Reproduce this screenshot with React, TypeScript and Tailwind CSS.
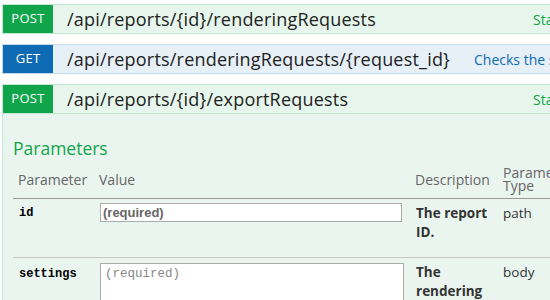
import React from "react";

const sans = { fontFamily: '"Open Sans", "Noto Sans", sans-serif' };

function Row({
  method,
  path,
  desc,
  pathW,
  color,
}: {
  method: string;
  path: string;
  desc: string;
  pathW: string;
  color: "green" | "blue";
}) {
  const g = color === "green";
  return (
    <div
      className={`flex h-[30px] w-[800px] items-stretch border ${
        g ? "border-[#c3e8d1] bg-[#e7f6ec]" : "border-[#c3d9ec] bg-[#e7f0f7]"
      }`}
    >
      <div
        className={`flex w-[50px] items-center justify-center text-[13px] tracking-[0.3px] text-white ${
          g ? "bg-[#10a54a]" : "bg-[#0f6ab4]"
        }`}
      >
        {method}
      </div>
      <div className={`flex items-center pl-[14px] text-[18px] tracking-[0.2px] text-[#222] ${pathW}`}>{path}</div>
      <div className={`flex items-center text-[14px] ${g ? "text-[#10a54a]" : "text-[#0f6ab4]"}`}>
        {desc}
      </div>
    </div>
  );
}

export default function App() {
  return (
    <div className="h-[300px] w-[550px] overflow-hidden bg-white pl-[2px] pt-[4px]" style={sans}>
      <div className="flex flex-col gap-[10px]">
        <Row
          method="POST"
          path="/api/reports/{id}/renderingRequests"
          desc="Starts a rendering request"
          pathW="w-[480px]"
          color="green"
        />
        <Row
          method="GET"
          path="/api/reports/renderingRequests/{request_id}"
          desc="Checks the status of a rendering request"
          pathW="w-[421px]"
          color="blue"
        />
        <div>
          <Row
            method="POST"
            path="/api/reports/{id}/exportRequests"
            desc="Starts an export request"
            pathW="w-[480px]"
            color="green"
          />
          <div className="w-[800px] border-x border-b border-[#c3e8d1] bg-[#ebf5f0] px-[10px] pb-4">
            <div className="pt-[22px] text-[17.5px] leading-[24px] text-[#10a54a]">Parameters</div>
            <table className="mt-[6px] w-[700px] border-collapse text-left">
              <thead>
                <tr className="border-b border-[#999] text-[14px] text-[#666]">
                  <th className="w-[84px] px-[5px] pb-[6px] align-middle font-normal">Parameter</th>
                  <th className="w-[315px] px-[2px] pb-[6px] align-middle font-normal">Value</th>
                  <th className="w-[88px] px-[3px] pb-[6px] align-middle font-normal">Description</th>
                  <th className="px-[3px] pb-[6px] align-middle font-normal leading-[13px]">
                    Parameter
                    <br />
                    Type
                  </th>
                </tr>
              </thead>
              <tbody>
                <tr className="border-b border-[#c8c8c8] align-top">
                  <td className="px-[6px] pt-[5px] text-[12px] font-bold" style={{ fontFamily: '"Liberation Mono", monospace' }}>
                    id
                  </td>
                  <td className="px-[3px] pt-[4px]">
                    <div
                      className="flex h-[19px] w-[302px] items-center border border-[#aaa] bg-white px-[2px] text-[13px] font-bold text-[#666]"
                      style={{ fontFamily: '"Liberation Sans", sans-serif' }}
                    >
                      (required)
                    </div>
                  </td>
                  <td className="px-[4px] pb-[15px] pt-[5px] text-[13.5px] font-bold leading-[19px] text-[#333]">
                    The report ID.
                  </td>
                  <td className="px-[3px] pt-[4px] text-[13.5px] text-[#333]">path</td>
                </tr>
                <tr className="align-top">
                  <td className="px-[6px] pt-[7px] text-[12px] font-bold" style={{ fontFamily: '"Liberation Mono", monospace' }}>
                    settings
                  </td>
                  <td className="px-[3px] pt-[5px]">
                    <div
                      className="h-[60px] w-[304px] border border-[#aaa] bg-white px-[4px] pt-[1px] text-[12.5px] text-[#888]"
                      style={{ fontFamily: '"Liberation Mono", monospace' }}
                    >
                      (required)
                    </div>
                  </td>
                  <td className="px-[4px] pt-[5px] text-[13.5px] font-bold leading-[19px] text-[#333]">
                    The rendering settings.
                  </td>
                  <td className="px-[3px] pt-[4px] text-[13.5px] text-[#333]">body</td>
                </tr>
              </tbody>
            </table>
          </div>
        </div>
      </div>
    </div>
  );
}
